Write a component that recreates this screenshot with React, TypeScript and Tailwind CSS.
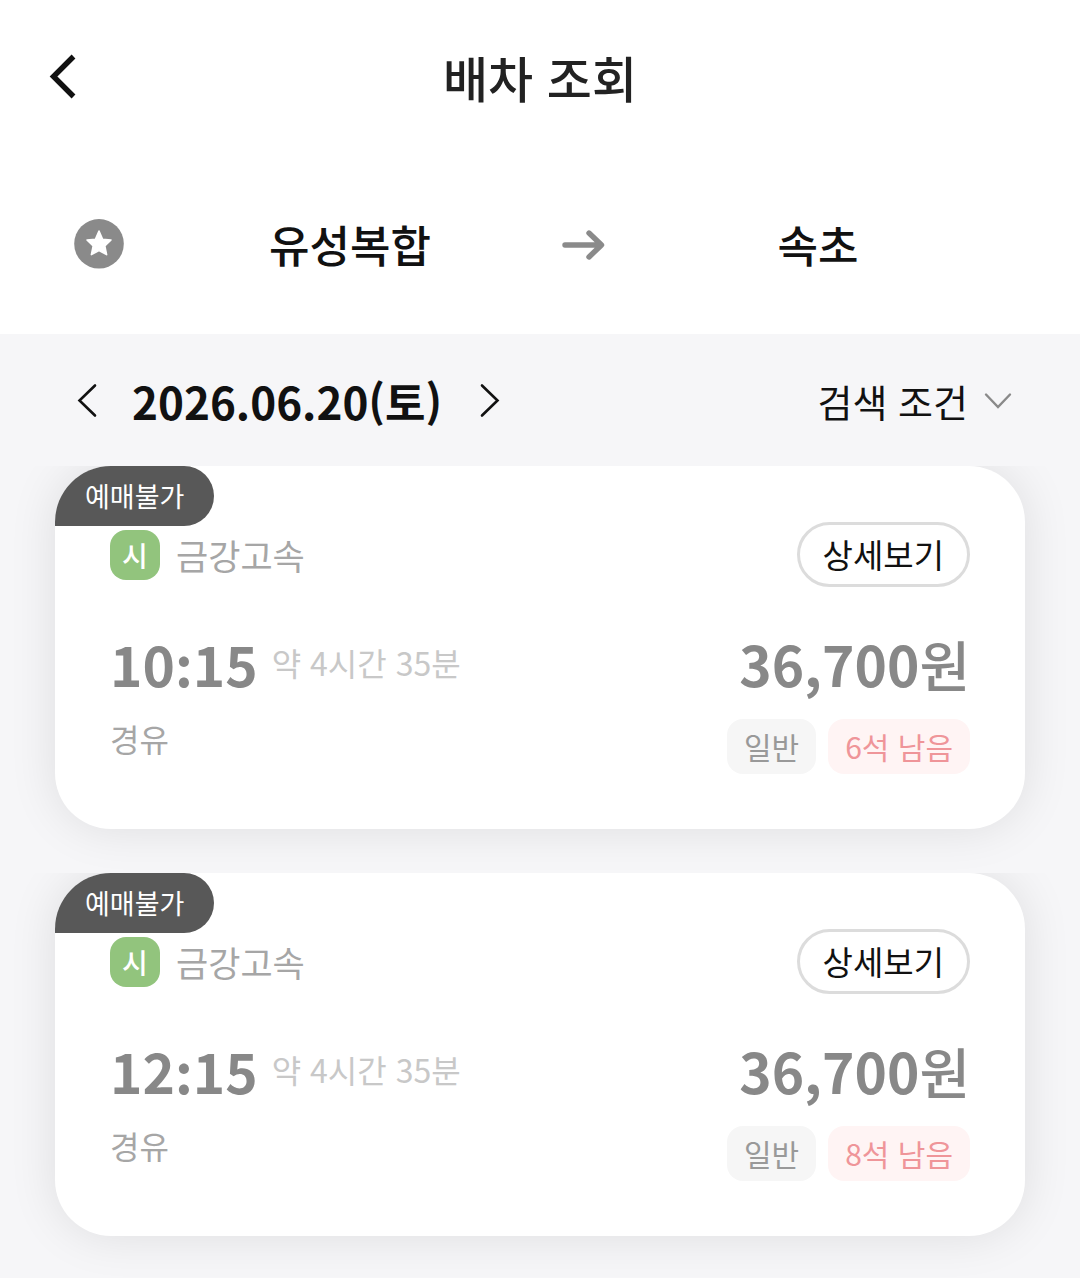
type Bus = {
    id: number;
    company: string;
    departure: string;
    duration: string;
    route: string;
    price: string;
    grade: string;
    seats: string;
};

const buses: Bus[] = [
    { id: 1, company: "금강고속", departure: "10:15", duration: "약 4시간 35분", route: "경유", price: "36,700", grade: "일반", seats: "6석 남음" },
    { id: 2, company: "금강고속", departure: "12:15", duration: "약 4시간 35분", route: "경유", price: "36,700", grade: "일반", seats: "8석 남음" },
];

function Header() {
    return (
        <header className="grid grid-cols-[1fr_auto_1fr] items-center px-12 h-[154px]">
            <button type="button" aria-label="뒤로" className="justify-self-start">
                <svg className="w-7 h-12" viewBox="0 0 28 48" fill="none" stroke="#111" strokeWidth="5.4">
                    <path d="M25.500 3.500 L5.500 23.500 L25.500 43.500" />
                </svg>
            </button>
            <h1 className="text-[49px] leading-[72px] font-medium text-[#222]">배차 조회</h1>
        </header>
    );
}

function Route() {
    return (
        <div className="flex items-center pl-[74px] pr-[60px] pt-[54px] pb-[54px]">
            <button type="button" aria-label="즐겨찾기" className="mr-6 shrink-0">
                <svg className="w-[50px] h-[50px]" viewBox="0 0 50 50">
                    <circle cx="25" cy="24.8" r="24.8" fill="#8a8a8a" />
                    <path
                        d="M25 12 L28.6 20.4 L37 21 L30.8 27 L32.6 35.6 L25 31.6 L17.4 35.6 L19.2 27 L13 21 L21.4 20.4 Z"
                        fill="#fff"
                        stroke="#fff"
                        strokeWidth="1.6"
                        strokeLinejoin="round"
                    />
                </svg>
            </button>
            <p className="flex-1 text-center text-[44px] leading-[72px] font-medium text-[#111]">유성복합</p>
            <svg
                className="w-16 h-8 shrink-0"
                viewBox="0 0 64 32"
                fill="none"
                stroke="#8a8a8a"
                strokeWidth="5.4"
                strokeLinecap="round"
                strokeLinejoin="round"
            >
                <path d="M13 17 H49 M37 5 L49.500 17 L37 29" />
            </svg>
            <p className="flex-1 text-center text-[44px] leading-[72px] font-medium text-[#111]">속초</p>
        </div>
    );
}

function DateBar() {
    return (
        <div className="flex items-center justify-between pt-0.5 pl-[76px] pr-[68px] h-[132px]">
            <div className="flex items-center">
                <button type="button" aria-label="이전 날짜">
                    <svg className="w-6 h-9" viewBox="0 0 24 36" fill="none" stroke="#111" strokeWidth="2.6" strokeLinecap="round">
                        <path d="M19 2.500 L3.500 17.500 L19 32.500" />
                    </svg>
                </button>
                <p className="ml-8 mr-9 text-[44px] leading-[64px] font-bold text-[#111]">2026.06.20(토)</p>
                <button type="button" aria-label="다음 날짜">
                    <svg className="w-6 h-9" viewBox="0 0 24 36" fill="none" stroke="#111" strokeWidth="2.6" strokeLinecap="round">
                        <path d="M4 2.500 L19.500 17.500 L4 32.500" />
                    </svg>
                </button>
            </div>
            <button type="button" className="flex items-center gap-4 text-[38px] leading-[56px] text-[#111]">
                검색 조건
                <svg className="w-7 h-5" viewBox="0 0 28 20" fill="none" stroke="#8a8a8a" strokeWidth="2.4" strokeLinecap="round">
                    <path d="M2 3.500 L14 16 L26 3.500" />
                </svg>
            </button>
        </div>
    );
}

function BusCard({ bus }: { bus: Bus }) {
    return (
        <li className="overflow-hidden px-[55px] pb-11">
            <article className="relative rounded-[56px] bg-white px-[55px] pt-14 pb-[55px] shadow-[0_0_48px_rgba(0,0,0,0.1)]">
                <span className="absolute top-0 left-0 rounded-tl-[56px] rounded-r-[30px] bg-[#585858] px-[30px] text-[27px] leading-[60px] text-white">
                    예매불가
                </span>
                <div className="flex items-center justify-between">
                    <div className="flex items-center">
                        <span className="w-[50px] h-[50px] rounded-2xl bg-[#92c47d] text-center text-[28px] leading-[50px] font-medium text-white">시</span>
                        <span className="ml-4 text-[35px] leading-[52px] text-[#a6a6a6]">{bus.company}</span>
                    </div>
                    <button type="button" className="rounded-full border-3 border-[#dcdcdc] px-[23px] text-[33px] leading-[59px] text-[#111]">
                        상세보기
                    </button>
                </div>
                <div className="mt-[34px] flex items-start justify-between">
                    <div className="flex items-start gap-[14px]">
                        <time lang="en" className="font-['Noto_Sans_CJK_JP','Noto_Sans_CJK_KR',sans-serif] text-[55px] leading-[84px] font-bold text-[#888]">
                            {bus.departure}
                        </time>
                        <span className="text-[32px] leading-[82px] text-[#c8c8c8]">{bus.duration}</span>
                    </div>
                    <p className="text-[55px] leading-[84px] font-bold text-[#888]">
                        {bus.price}
                        <span className="font-medium">원</span>
                    </p>
                </div>
                <div className="mt-[14px] flex items-start justify-between">
                    <span className="text-[32px] leading-[38px] text-[#a6a6a6]">{bus.route}</span>
                    <div className="flex gap-3 text-[30px] leading-[55px]">
                        <span className="rounded-2xl bg-[#f6f6f6] px-[17px] text-[#999]">{bus.grade}</span>
                        <span className="rounded-2xl bg-[#fff4f4] px-[17px] text-[#ef9599]">{bus.seats}</span>
                    </div>
                </div>
            </article>
        </li>
    );
}

export default function App() {
    return (
        <main lang="ko" className="min-h-screen bg-[#f6f6f8] font-['Noto_Sans_CJK_KR',sans-serif]">
            <section className="bg-white">
                <Header />
                <Route />
            </section>
            <DateBar />
            <ul>
                {buses.map((bus) => (
                    <BusCard key={bus.id} bus={bus} />
                ))}
            </ul>
        </main>
    );
}
